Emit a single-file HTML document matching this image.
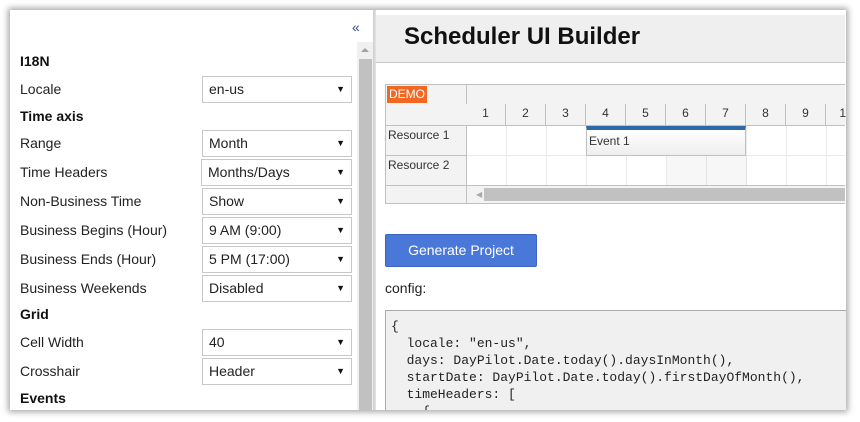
<!DOCTYPE html>
<html><head><style>
*{margin:0;padding:0;box-sizing:border-box}
body{width:860px;height:422px;background:#fff;font-family:"Liberation Sans",sans-serif;position:relative;overflow:hidden;color:#222}
.card{position:absolute;left:10px;top:10px;width:836px;height:400px;background:#fff;box-shadow:0 0 6px 2px rgba(0,0,0,.35);overflow:hidden}
.a{position:absolute}
.lbl{position:absolute;left:20px;font-size:14px;line-height:18px;color:#222}
.h{position:absolute;left:20px;font-size:14px;font-weight:bold;line-height:18px;color:#111}
.sel{position:absolute;left:202px;width:150px;height:27px;border:1px solid #c8c8c8;background:#fff;font-size:14px;line-height:25px;padding-left:6px;color:#222}
.sel:after{content:"▼";position:absolute;right:6px;top:0;font-size:9px;color:#111}
.cell{position:absolute;border-right:1px solid #c0c0c0;font-size:12px;text-align:center;color:#333}
pre{font-family:"Liberation Mono",monospace;font-size:13px;line-height:17px;color:#222}
</style></head><body>
<div class="card"></div>
<!-- left panel -->
<div class="a" style="left:352px;top:19px;font-size:14px;color:#2a4a8a">«</div>
<div class="a" style="left:357px;top:42px;width:16px;height:368px;background:#f0f0f0"></div>
<div class="a" style="left:361px;top:48px;width:0;height:0;border-left:4px solid transparent;border-right:4px solid transparent;border-bottom:4px solid #a0a0a0"></div>
<div class="a" style="left:359px;top:59px;width:13px;height:351px;background:#c1c1c1"></div>
<div class="a" style="left:373px;top:10px;width:3px;height:400px;background:linear-gradient(to right,#ccc,#e4e4e4)"></div>

<div class="h" style="top:52px">I18N</div>
<div class="lbl" style="top:80px">Locale</div><div class="sel" style="top:76px">en-us</div>
<div class="h" style="top:107px">Time axis</div>
<div class="lbl" style="top:134px">Range</div><div class="sel" style="top:130px">Month</div>
<div class="lbl" style="top:163px">Time Headers</div><div class="sel" style="top:159px;left:201px;width:151px">Months/Days</div>
<div class="lbl" style="top:192px">Non-Business Time</div><div class="sel" style="top:188px">Show</div>
<div class="lbl" style="top:221px">Business Begins (Hour)</div><div class="sel" style="top:217px">9 AM (9:00)</div>
<div class="lbl" style="top:250px">Business Ends (Hour)</div><div class="sel" style="top:246px">5 PM (17:00)</div>
<div class="lbl" style="top:279px">Business Weekends</div><div class="sel" style="top:275px">Disabled</div>
<div class="h" style="top:305px">Grid</div>
<div class="lbl" style="top:333px">Cell Width</div><div class="sel" style="top:329px">40</div>
<div class="lbl" style="top:362px">Crosshair</div><div class="sel" style="top:358px">Header</div>
<div class="h" style="top:389px">Events</div>

<!-- right header -->
<div class="a" style="left:376px;top:15px;width:469px;height:48px;background:#efefef;border-bottom:1px solid #c8c8c8"></div>
<div class="a" style="left:404px;top:22px;font-size:24px;font-weight:bold;color:#111;line-height:30px">Scheduler UI Builder</div>

<!-- scheduler -->
<div class="a" style="left:385px;top:84px;width:460px;height:120px;border:1px solid #c0c0c0;border-right:none;background:#f3f3f3;overflow:hidden">
  <div class="a" style="left:80px;top:0;width:1px;height:120px;background:#c0c0c0"></div>
  <div class="a" style="left:0;top:0;padding:1px 2px;font-size:12px;line-height:15px;background:#f26722;color:#fff;left:1px;top:1px">DEMO</div>
  <div class="a" style="left:81px;top:19px;width:400px;height:1px;background:#c0c0c0"></div>
  <div class="a" style="left:0;top:40px;width:460px;height:1px;background:#c0c0c0"></div>
  <div class="a" style="left:0;top:70px;width:81px;height:1px;background:#c0c0c0"></div>
  <div class="a" style="left:0;top:100px;width:460px;height:1px;background:#c0c0c0"></div>
  <div class="a" style="left:2px;top:43px;font-size:12px;color:#333">Resource 1</div>
  <div class="a" style="left:2px;top:73px;font-size:12px;color:#333">Resource 2</div>
  <div class="a" style="left:81px;top:41px;width:380px;height:59px;background:#fff;
    background-image:linear-gradient(to right,transparent 39px,#eaeaea 39px),linear-gradient(#eaeaea,#eaeaea);
    background-size:40px 100%,100% 1px;background-position:0 0,0 29px;background-repeat:repeat-x,no-repeat"></div>
  <div class="a" style="left:281px;top:71px;width:80px;height:29px;background:rgba(0,0,0,.03)"></div>
  <div class="a" style="left:200px;top:41px;width:160px;height:30px;border:1px solid #c0c0c0;border-top:4px solid #2e6aa6;background:linear-gradient(#fff,#eee);font-size:12px;line-height:22px;padding-left:2px;color:#333">Event 1</div>
  <div class="a" style="left:90px;top:101px;width:4px;height:18px;font-size:8px;color:#aaa;line-height:18px">◀</div>
  <div class="a" style="left:98px;top:103px;width:370px;height:13px;background:#c1c1c1"></div>
</div>
<div class="a" style="left:466px;top:104px;height:21px;width:380px;overflow:hidden">
  <div class="cell" style="left:0;width:40px;top:3px;border:none">1</div>
</div>
<div class="a" style="left:466px;top:104px;width:380px;height:21px;overflow:hidden;font-size:12px;color:#333;display:flex">
  <div style="flex:0 0 40px;border-right:1px solid #c0c0c0;text-align:center;line-height:19px;background:#f3f3f3">1</div>
  <div style="flex:0 0 40px;border-right:1px solid #c0c0c0;text-align:center;line-height:19px;background:#f3f3f3">2</div>
  <div style="flex:0 0 40px;border-right:1px solid #c0c0c0;text-align:center;line-height:19px;background:#f3f3f3">3</div>
  <div style="flex:0 0 40px;border-right:1px solid #c0c0c0;text-align:center;line-height:19px;background:#f3f3f3">4</div>
  <div style="flex:0 0 40px;border-right:1px solid #c0c0c0;text-align:center;line-height:19px;background:#f3f3f3">5</div>
  <div style="flex:0 0 40px;border-right:1px solid #c0c0c0;text-align:center;line-height:19px;background:#f3f3f3">6</div>
  <div style="flex:0 0 40px;border-right:1px solid #c0c0c0;text-align:center;line-height:19px;background:#f3f3f3">7</div>
  <div style="flex:0 0 40px;border-right:1px solid #c0c0c0;text-align:center;line-height:19px;background:#f3f3f3">8</div>
  <div style="flex:0 0 40px;border-right:1px solid #c0c0c0;text-align:center;line-height:19px;background:#f3f3f3">9</div>
  <div style="flex:0 0 40px;text-align:center;line-height:19px;background:#f3f3f3">10</div>
</div>

<!-- button -->
<div class="a" style="left:385px;top:234px;width:152px;height:33px;background:#4a78d8;border:1px solid #3a64c0;border-radius:2px;color:#fff;font-size:14px;line-height:31px;text-align:center">Generate Project</div>
<div class="a" style="left:385px;top:279px;font-size:14px;line-height:18px;color:#222">config:</div>
<div class="a" style="left:385px;top:310px;width:461px;height:100px;background:#f0f0f0;border:1px solid #aaa;border-bottom:none;border-right:none;padding:7px 0 0 5px;overflow:hidden">
<pre>{
  locale: "en-us",
  days: DayPilot.Date.today().daysInMonth(),
  startDate: DayPilot.Date.today().firstDayOfMonth(),
  timeHeaders: [
    {</pre>
</div>
</body></html>
